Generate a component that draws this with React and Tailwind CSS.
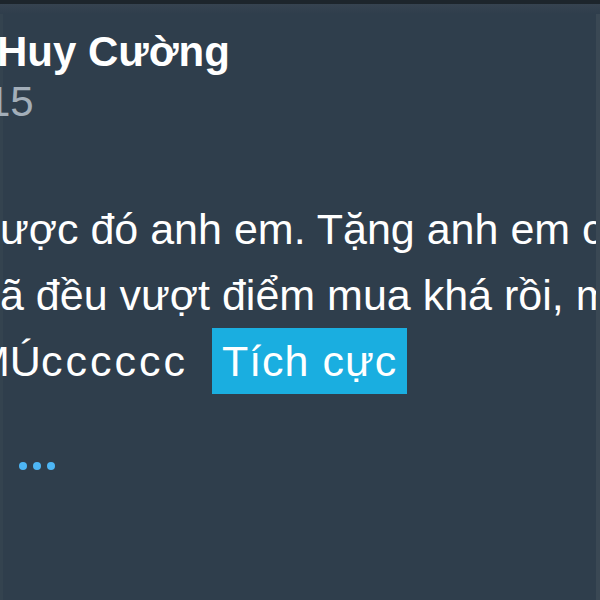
export default function App() {
  const font = { fontFamily: '"Liberation Sans", Arial, sans-serif' };
  return (
    <div className="w-[600px] h-[600px] overflow-hidden bg-[#2f3e4c] flex flex-col" style={font}>
      <div className="h-[4px] bg-[#1d252c] shrink-0" />
      <div className="h-[10px] bg-gradient-to-b from-[#364350] to-[#2f3e4c] shrink-0" />
      <div className="flex-1 flex">
        <div className="w-[3px] bg-[#34434f] shrink-0" />
        <div className="flex-1 overflow-hidden flex flex-col -ml-[3px]">
          <div className="text-[42px] font-bold text-white leading-[48px] mt-[14px] whitespace-nowrap -ml-[3px]">Huy Cường</div>
          <div className="text-[42px] text-[#a3aeb9] leading-[44px] mt-[4px] whitespace-nowrap -ml-[13px]">15</div>
          <div className="mt-[72px] text-[43px] text-white leading-[66px] whitespace-nowrap">
            <div>ược đó anh em. Tặng anh em cả</div>
            <div>ã đều vượt điểm mua khá rồi, mọi</div>
            <div className="flex items-center -ml-[26px]">
              <span>MÚ<span className="tracking-[3px]">cccccc</span></span>
              <span className="ml-[24px] bg-[#1aaee0] px-[10px] leading-[66px] tracking-[1px]">Tích cực</span>
            </div>
          </div>
          <div className="mt-[68px] ml-[19px] flex gap-[6px]">
            <span className="w-[8px] h-[8px] rounded-full bg-[#4db6f5]" />
            <span className="w-[8px] h-[8px] rounded-full bg-[#4db6f5]" />
            <span className="w-[8px] h-[8px] rounded-full bg-[#4db6f5]" />
          </div>
        </div>
        <div className="w-[4px] bg-[#3a4854] shrink-0" />
      </div>
    </div>
  );
}
